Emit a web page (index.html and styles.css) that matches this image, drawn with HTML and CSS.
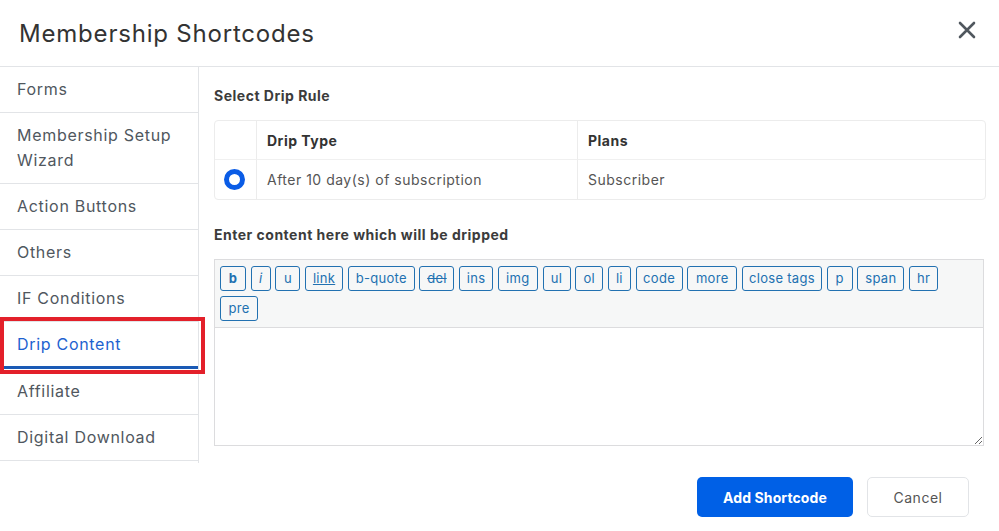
FILE: index.html
```html
<!DOCTYPE html>
<html lang="en">
<head>
<meta charset="utf-8">
<title>Membership Shortcodes</title>
<link rel="stylesheet" href="styles.css">
</head>
<body>
<div class="modal">
  <header class="modal-header">
    <h1 class="modal-title">Membership Shortcodes</h1>
    <button class="close" aria-label="Close">
      <svg width="18" height="18" viewBox="0 0 18 18"><path d="M2 2 L16 16 M16 2 L2 16" stroke="#50575e" stroke-width="2.6" stroke-linecap="round"/></svg>
    </button>
  </header>
  <div class="modal-body">
    <nav class="sidebar">
      <div class="nav-item">Forms</div>
      <div class="nav-item">Membership Setup Wizard</div>
      <div class="nav-item">Action Buttons</div>
      <div class="nav-item">Others</div>
      <div class="nav-item">IF Conditions</div>
      <div class="nav-item active">Drip Content<span class="highlight"></span></div>
      <div class="nav-item">Affiliate</div>
      <div class="nav-item">Digital Download</div>
    </nav>
    <main class="content">
      <h2 class="label">Select Drip Rule</h2>
      <table class="rules">
        <thead>
          <tr><th class="sel"></th><th class="type">Drip Type</th><th>Plans</th></tr>
        </thead>
        <tbody>
          <tr><td class="sel"><span class="radio"></span></td><td>After 10 day(s) of subscription</td><td>Subscriber</td></tr>
        </tbody>
      </table>
      <h2 class="label label2">Enter content here which will be dripped</h2>
      <div class="editor">
        <div class="toolbar">
          <button class="qt qt-b">b</button>
          <button class="qt qt-i">i</button>
          <button class="qt qt-u">u</button>
          <button class="qt qt-link">link</button>
          <button class="qt qt-quote">b-quote</button>
          <button class="qt qt-del">del</button>
          <button class="qt qt-ins">ins</button>
          <button class="qt qt-img">img</button>
          <button class="qt qt-ul">ul</button>
          <button class="qt qt-ol">ol</button>
          <button class="qt qt-li">li</button>
          <button class="qt qt-code">code</button>
          <button class="qt qt-more">more</button>
          <button class="qt qt-close">close tags</button>
          <button class="qt qt-p">p</button>
          <button class="qt qt-span">span</button>
          <button class="qt qt-hr">hr</button>
          <button class="qt qt-pre">pre</button>
        </div>
        <textarea class="area"></textarea>
      </div>
      <div class="footer">
        <button class="btn primary">Add Shortcode</button>
        <button class="btn secondary">Cancel</button>
      </div>
    </main>
  </div>
</div>
</body>
</html>
```

FILE: styles.css
```css
* { box-sizing: border-box; }
html, body { margin: 0; padding: 0; background: #fff; }
body {
  font-family: Inter, "Open Sans", "Liberation Sans", sans-serif;
  color: #3c434a;
  width: 999px;
  height: 531px;
  overflow: hidden;
  letter-spacing: 0.5px;
}
button { font-family: inherit; letter-spacing: inherit; cursor: pointer; }

.modal-header {
  height: 67px;
  border-bottom: 1px solid #e2e4e7;
  display: flex;
  align-items: center;
  justify-content: space-between;
  padding: 0 22px 0 19px;
}
.modal-title {
  margin: 0;
  font-size: 24px;
  font-weight: 400;
  color: #333;
  letter-spacing: 0.8px;
}
.close {
  border: 0;
  background: none;
  padding: 0;
  width: 20px;
  height: 20px;
  display: flex;
  align-items: center;
  justify-content: center;
  margin-bottom: 6px;
}

.modal-body { display: flex; align-items: flex-start; }

.sidebar {
  width: 199px;
  flex: none;
  border-right: 1px solid #e2e4e7;
  padding-bottom: 2px;
}
.nav-item {
  position: relative;
  padding: 10px 17px;
  line-height: 25px;
  font-size: 16px;
  color: #50575e;
  border-bottom: 1px solid #e2e4e7;
  letter-spacing: 0.7px;
}
.nav-item.active {
  color: #1d62d0;
  border-bottom: 3px solid #1a5ab5;
  margin-left: 4px;
  padding-left: 13px;
  padding-bottom: 9px;
}
.highlight {
  position: absolute;
  top: -5px;
  left: -4px;
  right: -7px;
  bottom: -8px;
  border: 4px solid #e3202a;
  pointer-events: none;
}

.content {
  flex: 1;
  padding: 19px 13px 0 15px;
}
.label {
  margin: 0;
  font-size: 14px;
  line-height: 20px;
  font-weight: 700;
  color: #3c3c3c;
}
.label2 { margin-top: 25px; }

.rules {
  margin-top: 14px;
  width: 100%;
  border-collapse: separate;
  border-spacing: 0;
  border: 1px solid #ececec;
  border-radius: 4px;
  font-size: 14px;
}
.rules th, .rules td {
  padding: 0 10px;
  text-align: left;
  border-left: 1px solid #ececec;
}
.rules th:first-child, .rules td:first-child { border-left: 0; }
.rules th { font-weight: 700; color: #333; border-bottom: 1px solid #f0f0f0; height: 39px; }
.rules td { color: #555; height: 39px; }
.rules .sel { width: 41px; padding: 0 3px 0 0; text-align: center; }
.rules .type { width: 321px; }
.radio {
  display: inline-block;
  width: 21px;
  height: 21px;
  border-radius: 50%;
  border: 5.5px solid #0a5ce6;
  vertical-align: middle;
}

.editor {
  margin-top: 14px;
  border: 1px solid #dcdcde;
  width: 770px;
}
.toolbar {
  background: #f6f7f7;
  padding: 6px 12px 6px 5px;
  display: flex;
  flex-wrap: wrap;
  gap: 5px 4.7px;
  border-bottom: 1px solid #dcdcde;
}
.qt {
  flex: none;
  height: 25px;
  padding: 0;
  text-align: center;
  border: 1px solid #2271b1;
  border-radius: 3px;
  background: #f6f7f7;
  color: #2271b1;
  font-size: 13px;
  line-height: 23px;
  letter-spacing: 0.3px;
}
.qt-b { font-weight: 700; width: 26px; }
.qt-i { font-style: italic; width: 20px; }
.qt-u { width: 25px; }
.qt-link { width: 38px; text-decoration: underline; }
.qt-quote { width: 67px; }
.qt-del { width: 35px; text-decoration: line-through; }
.qt-ins { width: 34px; }
.qt-img { width: 40px; }
.qt-ul { width: 28px; }
.qt-ol { width: 28px; }
.qt-li { width: 23px; }
.qt-code { width: 47px; }
.qt-more { width: 50px; }
.qt-close { width: 80px; }
.qt-p { width: 26px; }
.qt-span { width: 47px; }
.qt-hr { width: 29px; }
.qt-pre { width: 38px; }

.area {
  display: block;
  width: 100%;
  height: 117px;
  border: 0;
  margin: 0;
  resize: vertical;
  background: #fff;
}

.footer {
  display: flex;
  justify-content: flex-end;
  gap: 14px;
  margin-top: 31px;
  padding-right: 17px;
}
.btn {
  height: 40px;
  border-radius: 5px;
  font-size: 14px;
}
.btn.primary {
  width: 156px;
  background: #0060e6;
  border: 0;
  color: #fff;
  font-weight: 700;
  letter-spacing: 0.1px;
}
.btn.secondary {
  width: 102px;
  background: #fff;
  border: 1px solid #e2e4e7;
  color: #555;
}
```
